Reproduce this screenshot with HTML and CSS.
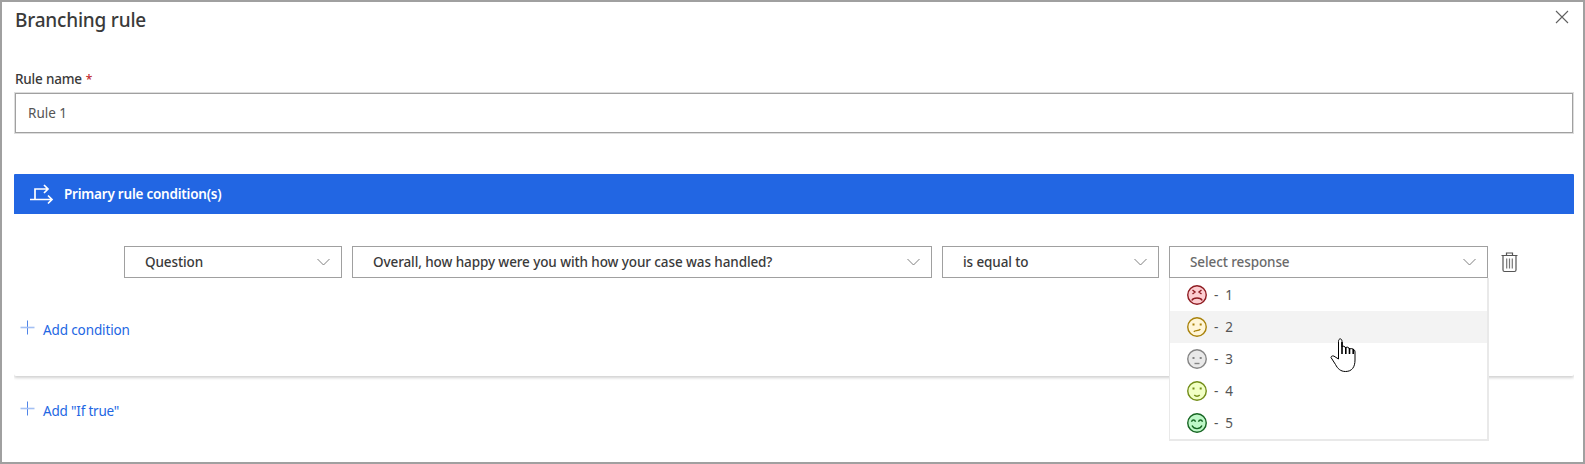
FILE: index.html
```html
<!DOCTYPE html>
<html lang="en">
<head>
<meta charset="utf-8">
<title>Branching rule</title>
<link rel="stylesheet" href="styles.css">
</head>
<body>
<main class="panel">
  <header class="panel-header">
    <h1 class="title">Branching rule</h1>
    <svg class="close" viewBox="0 0 14 14"><path d="M1 1l12 12M13 1L1 13"/></svg>
  </header>
  <div class="field">
    <label class="label" for="rule">Rule name<span class="required">*</span></label>
    <input class="input" id="rule" value="Rule 1">
  </div>
  <section class="card">
    <div class="card-header">
      <svg class="branch" viewBox="0 0 24 20"><path d="M0 15.5h22M5 15.5V5h13M14 1l4 4-4 4M18 11.500l4 4-4 4"/></svg>
      <span class="card-title">Primary rule condition(s)</span>
    </div>
    <div class="conditions">
      <div class="select kind"><span>Question</span><svg class="chevron" viewBox="0 0 13 8"><path d="M.5 1l6 6 6-6"/></svg></div>
      <div class="select question"><span>Overall, how happy were you with how your case was handled?</span><svg class="chevron" viewBox="0 0 13 8"><path d="M.5 1l6 6 6-6"/></svg></div>
      <div class="select operator"><span>is equal to</span><svg class="chevron" viewBox="0 0 13 8"><path d="M.5 1l6 6 6-6"/></svg></div>
      <div class="select response"><span>Select response</span><svg class="chevron" viewBox="0 0 13 8"><path d="M.5 1l6 6 6-6"/></svg>
        <ul class="menu">
          <li class="option"><svg class="face f1" viewBox="0 0 20 20"><circle cx="10" cy="10" r="9.250"/><path d="M5.500 5l2.500 2-2.500 2M14.500 5L12 7l2.500 2M4.800 15.500c1.500-3.300 8.900-3.300 10.400 0"/></svg><span class="dash">-</span><span>1</span></li>
          <li class="option hover"><svg class="face f2" viewBox="0 0 20 20"><circle cx="10" cy="10" r="9.250"/><path d="M6.800 14.700c1.500-1.500 4.500-.5 6.600-2.500"/><path class="eyes" d="M5.500 6.500h2v2h-2zM12.700 6.500h2v2h-2z"/></svg><span class="dash">-</span><span>2</span></li>
          <li class="option"><svg class="face f3" viewBox="0 0 20 20"><circle cx="10" cy="10" r="9.250"/><path d="M7.500 14.500h5"/><path class="eyes" d="M5.500 8h2v2h-2zM12.700 8h2v2h-2z"/></svg><span class="dash">-</span><span>3</span></li>
          <li class="option"><svg class="face f4" viewBox="0 0 20 20"><circle cx="10" cy="10" r="9.250"/><path d="M7.300 14c1.300 1.600 4.100 1.600 5.400 0"/><path class="eyes" d="M5.500 6.500h2v2h-2zM12.700 6.500h2v2h-2z"/></svg><span class="dash">-</span><span>4</span></li>
          <li class="option"><svg class="face f5" viewBox="0 0 20 20"><circle cx="10" cy="10" r="9.250"/><path d="M4.500 8.800c.7-2.400 3.300-2.400 4 0M11.500 8.800c.7-2.400 3.300-2.400 4 0M5 12.500c2 4.200 8 4.200 10 0"/></svg><span class="dash">-</span><span>5</span></li>
        </ul>
        <svg class="cursor" viewBox="0 0 26 34"><path class="hand" d="M8.500 21V3.500C8.500 0 12 0 12 3.500V9c1-1.500 3-1 3.500 1 1.500-1.500 3.300-1 4 1 2-1 5.500 0 5.500 3v8c0 7-3 11.500-9.500 11.500-5 0-8-3-10-7L1 19.500c0-2 3-2 4-.7z"/><path class="fingers" d="M12 4v12M15.800 9v7M19.500 10v6M23.200 11v5"/></svg>
      </div>
      <svg class="trash" viewBox="0 0 17 20"><path d="M.5 3.500h16M5.500 3V1h6v2M2 4v14q0 1.500 1.500 1.500h10q1.500 0 1.500-1.500V4"/><path class="bars" d="M5.700 6.500v10M8.500 6.500v10M11.300 6.500v10"/></svg>
    </div>
    <a class="add"><svg class="plus" viewBox="0 0 15 15"><path class="v" d="M7.500.5v14"/><path class="h" d="M.5 7.500h14"/></svg><span>Add condition</span></a>
  </section>
  <a class="add last"><svg class="plus" viewBox="0 0 15 15"><path class="v" d="M7.500.5v14"/><path class="h" d="M.5 7.500h14"/></svg><span>Add "If true"</span></a>
</main>
</body>
</html>
```
FILE: styles.css
```css
* { box-sizing: border-box; }
body { margin: 0; font: 14px/20px "Noto Sans", "Open Sans", sans-serif; color: #3a3a3a; }
svg { display: block; flex: none; fill: none; overflow: visible; }
.panel { width: 1585px; height: 464px; border: 2px solid #a0a0a0; background: #fff; padding: 0 9px 0 12px; }
.panel-header { display: flex; justify-content: space-between; height: 66px; padding: 4px 5px 0 1px; }
.title { margin: 0; font-size: 19px; line-height: 28px; font-weight: 500; letter-spacing: -.2px; }
.close { width: 14px; height: 14px; margin-top: 4px; stroke: #606060; stroke-width: 1.1; }
.field { height: 106px; padding: 1px 1px 0; }
.label { display: block; height: 24px; font-weight: 500; font-size: 13.500px; letter-spacing: -.2px; }
.required { color: #c0282d; margin-left: 4px; font-size: 12px; }
.input { display: block; width: 1558px; height: 40px; padding: 0 12px; border: 1px solid #a0a0a0; box-shadow: 0 0 0 1px #ddd; font: inherit; font-size: 13.500px; color: #555; outline: 0; }
.card { width: 1560px; height: 202px; border-radius: 2px; box-shadow: 0 2px 3px rgba(0,0,0,.18); clip-path: inset(0 0 -80px 0); }
.card-header { display: flex; align-items: center; height: 40px; background: #2266e3; color: #fff; padding-left: 16px; border-radius: 1px 1px 0 0; }
.branch { width: 24px; height: 20px; stroke: #fff; stroke-width: 1.700; margin-right: 10px; }
.card-title { font-weight: 600; font-size: 13.500px; letter-spacing: -.22px; }
.conditions { display: flex; gap: 10px; padding: 32px 0 0 110px; height: 104px; }
.select { display: flex; align-items: center; justify-content: space-between; height: 32px; border: 1px solid #a0a0a0; padding: 0 11px 0 20px; font-weight: 500; font-size: 13.500px; letter-spacing: -.1px; background: #fff; white-space: nowrap; }
.kind { width: 218px; }
.question { width: 580px; }
.operator { width: 217px; }
.response { width: 319px; position: relative; color: #6a6a6a; }
.chevron { width: 13px; height: 8px; stroke: #808080; }
.menu { position: absolute; z-index: 1; left: -1px; top: 31px; width: 320px; height: 163px; margin: 0; padding: 1px 0 0; list-style: none; background: #fff; border: 1px solid #e9e9e9; border-width: 0 2px 2px 1px; }
.option { display: flex; align-items: center; height: 32px; padding-left: 17px; color: #555; font-weight: 400; }
.hover { background: #f3f3f3; }
.face { width: 20px; height: 20px; stroke-width: 1.400; }
.dash { margin: 0 7px 0 7px; }
.eyes { stroke: none; }
.f1 { stroke: #8e1b21; fill: #fdcdd1; }
.f2 { stroke: #a9820b; fill: #fff6d8; }
.f3 { stroke: #858585; fill: #e9e9e9; }
.f4 { stroke: #728d18; fill: #f1ffc4; }
.f5 { stroke: #166522; fill: #bdf7c7; }
.face path { fill: none; }
.face .eyes { stroke: none; }
.face.f2 .eyes { fill: #a9820b; }
.face.f3 .eyes { fill: #858585; }
.face.f4 .eyes { fill: #728d18; }
.cursor { position: absolute; z-index: 2; left: 160px; top: 91px; width: 26px; height: 34px; }
.hand { fill: #fff; stroke: #000; stroke-width: 1; }
.fingers { stroke: #000; stroke-width: 1.600; }
.trash { width: 17px; height: 20px; margin: 6px 0 0 3px; stroke: #555; stroke-width: 1.2; }
.bars { stroke: #777; }
.add { display: flex; padding-left: 6px; color: #2266e3; font-size: 13.500px; letter-spacing: -.12px; }
.plus { width: 15px; height: 15px; margin-right: 8px; }
.v { stroke: #4f84e8; }
.h { stroke: #a3c0f3; stroke-width: 1.600; }
.card .add { padding-top: 2px; }
.last { margin-top: 25px; letter-spacing: -.2px; }
```
